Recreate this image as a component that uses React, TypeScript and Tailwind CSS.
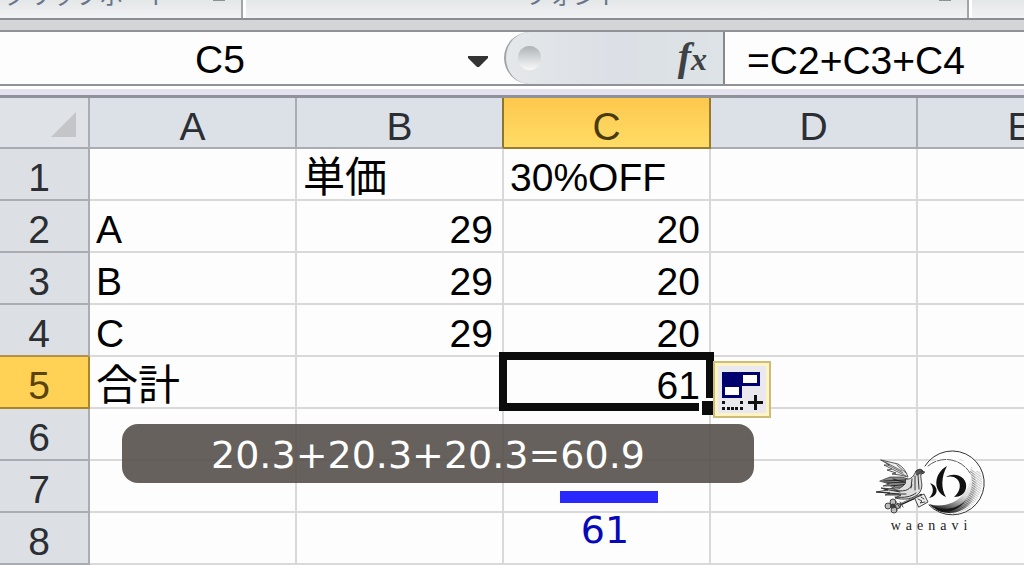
import type { ReactNode } from "react";

type RowData = { n: string; cells: string[] };

const columns = ["A", "B", "C", "D", "E"];

const rows: RowData[] = [
  { n: "1", cells: ["", "単価", "30%OFF", "", ""] },
  { n: "2", cells: ["A", "29", "20", "", ""] },
  { n: "3", cells: ["B", "29", "20", "", ""] },
  { n: "4", cells: ["C", "29", "20", "", ""] },
  { n: "5", cells: ["合計", "", "61", "", ""] },
  { n: "6", cells: ["", "", "", "", ""] },
  { n: "7", cells: ["", "", "", "", ""] },
  { n: "8", cells: ["", "", "", "", ""] },
  { n: "", cells: ["", "", "", "", ""] },
];

function RibbonGroup({ label, className }: { label: string; className: string }) {
  return (
    <div
      className={`relative flex h-full shrink-0 items-end justify-center border-r-2 border-[#a2a5a8] shadow-[3px_0_0_#fff] ${className}`}
    >
      <span className="mb-[10px] whitespace-nowrap text-[24px] leading-6 text-[#68748a]">{label}</span>
      <span className="absolute right-4 top-0 h-px w-3 bg-[#8d9194]" />
    </div>
  );
}

function Ribbon() {
  return (
    <header className="flex h-[18px] overflow-hidden bg-linear-to-b from-[#e4e7e8] to-[#f1f2f3]">
      <RibbonGroup label="クリップボード" className="w-[243px] pr-[66px]" />
      <RibbonGroup label="フォント" className="w-[726px] pr-[64px]" />
    </header>
  );
}

function FormulaBar() {
  return (
    <section className="flex h-[56px] border-y-2 border-[#8f9397] bg-[#fdfdfd]">
      <div className="flex w-[504px] shrink-0 items-center">
        <input
          aria-label="Name box"
          defaultValue="C5"
          className="h-full w-[440px] bg-transparent pt-[3px] text-center text-[39px] text-black outline-none"
        />
        <button aria-label="Show names" className="flex h-full flex-1 items-center justify-end pr-4">
          <svg width="20" height="12" viewBox="0 0 20 12" className="mt-2">
            <path d="M0 0H20V2L11 11H9L0 2Z" fill="#333" />
          </svg>
        </button>
      </div>
      <div className="flex w-[221px] shrink-0 items-center justify-between rounded-l-full border-l-2 border-r-2 border-l-[#a0a5aa] border-r-[#85898d] bg-linear-to-r from-[#e4e8ea] via-[#dce0e6] to-[#dde3e6] pl-3 pr-4">
        <span className="h-6 w-[23px] rounded-xl bg-linear-to-b from-[#aeb2b4] via-[#d5d8da] to-[#f8f9f9]" />
        <button
          aria-label="Insert function"
          className="font-['Liberation_Serif',serif] text-[40px] font-bold italic leading-10 text-[#3f4245]"
        >
          f<span className="text-[32px]">x</span>
        </button>
      </div>
      <input
        aria-label="Formula"
        defaultValue="=C2+C3+C4"
        className="min-w-0 flex-1 bg-transparent pl-[22px] pt-[7px] text-[39px] text-black outline-none"
      />
    </section>
  );
}

function Selection() {
  return (
    <>
      <div className="pointer-events-none absolute -bottom-1 -left-[5px] -right-[5px] -top-[5px] border-8 border-[#0c0c0c]" />
      <div className="absolute -bottom-2 -right-[5px] h-[17px] w-[15px] border-l-[3px] border-t-[3px] border-white bg-[#0c0c0c]" />
      <button
        aria-label="Auto fill options"
        className="absolute left-full top-1 ml-1 flex h-[57px] w-[58px] items-center justify-center border-2 border-[#cdbb78] bg-[#e9e8ef] shadow-[inset_0_0_0_3px_#fff3c4]"
      >
        <svg width="42" height="42" viewBox="0 0 42 42">
          <path d="M1 3H39V17H21V29H1Z" fill="#00006e" />
          <path d="M22 6H36V14H22ZM4 18H18V26H4Z" fill="#fff" />
          <path
            d="M1 32h3v3H1zM19 32h3v3h-3zM1 38h3v3H1zM6 38h3v3H6zM10 38h3v3h-3zM14 38h3v3h-3zM19 38h3v3h-3zM33 26h3v15h-3zM27 32h15v3H27z"
            fill="#111"
          />
        </svg>
      </button>
    </>
  );
}

function Cell({ text, selected }: { text: string; selected: boolean }) {
  const numeric = /^\d+$/.test(text);
  const japanese = /[^\x00-\x7f]/.test(text);
  let body: ReactNode = text;
  if (selected) {
    body = (
      <>
        {text}
        <Selection />
      </>
    );
  }
  return (
    <td
      className={`relative h-[52px] whitespace-nowrap border-b-2 border-r-2 border-[#d9d9d9] p-0 ${
        numeric ? "pr-[9px] text-right" : "pl-[6px] text-left"
      } ${japanese ? "pt-2 text-[42px] leading-[40px]" : "pt-2 text-[39px] leading-[42px]"} ${selected ? "z-10" : ""}`}
    >
      {body}
    </td>
  );
}

function columnStyle(c: string) {
  if (c === "C") return "border-[#9b7a2c] bg-linear-to-b from-[#fdc84c] to-[#ffdc66] text-[#4a3a12]";
  if (c === "B") return "border-b-[#a9adb3] border-r-[#8f742f] bg-[#dce0e7] text-[#2b2e33]";
  return "border-[#a9adb3] bg-[#dce0e7] text-[#2b2e33]";
}

function rowStyle(n: string) {
  if (n === "5") return "border-[#a8842f] bg-[#ffd155] text-[#5a430f]";
  if (n === "4") return "border-r-[#a9adb3] border-b-[#b0904a] bg-[#dce0e5] text-[#2b2e33]";
  return "border-[#a9adb3] bg-[#dce0e5] text-[#2b2e33]";
}

function Sheet() {
  return (
    <table className="w-[1125px] table-fixed border-separate border-spacing-0 text-black">
      <colgroup>
        <col className="w-[90px]" />
        {columns.map((c) => (
          <col key={c} className="w-[207px]" />
        ))}
      </colgroup>
      <thead>
        <tr>
          <th className="h-[51px] border-b-2 border-r-2 border-[#a9adb3] bg-[#dfe3e7] p-0 pt-1">
            <svg width="25" height="25" viewBox="0 0 26 26" className="ml-auto mr-3">
              <path d="M26 0V26H0Z" fill="#c3c5c8" />
            </svg>
          </th>
          {columns.map((c) => (
            <th
              key={c}
              className={`h-[51px] border-b-2 border-r-2 p-0 pt-2 text-[39px] font-normal leading-[41px] ${columnStyle(c)}`}
            >
              {c}
            </th>
          ))}
        </tr>
      </thead>
      <tbody>
        {rows.map((row, r) => (
          <tr key={r}>
            <th
              className={`h-[52px] border-b-2 border-r-2 p-0 pr-[10px] pt-2 text-[39px] font-normal leading-[42px] ${rowStyle(row.n)}`}
            >
              {row.n}
            </th>
            {row.cells.map((text, c) => (
              <Cell key={c} text={text} selected={row.n === "5" && c === 2} />
            ))}
          </tr>
        ))}
      </tbody>
    </table>
  );
}

function Logo() {
  return (
    <div className="absolute left-[872px] top-[446px] w-[116px]">
      <svg width="116" height="72" viewBox="0 0 116 72" fill="none" stroke="#333" strokeLinecap="round">
        <defs>
          <pattern id="hatch" width="2" height="2" patternUnits="userSpaceOnUse" patternTransform="rotate(35)">
            <path d="M0 0H2" stroke="#333" strokeWidth="1.1" />
          </pattern>
          <linearGradient id="shade" x1="0.75" y1="0" x2="0.35" y2="1">
            <stop offset="0" stopColor="#777" stopOpacity="0" />
            <stop offset="0.55" stopColor="#555" stopOpacity="0.2" />
            <stop offset="1" stopColor="#111" stopOpacity="0.95" />
          </linearGradient>
        </defs>

        <circle cx="76" cy="38" r="27" fill="#fdfdfd" stroke="none" />
        <path d="M54 18A32 32 0 1 1 58 60A27 27 0 1 0 96 18A31 31 0 0 0 54 18Z" fill="#fdfdfd" stroke="none" />
        <path d="M53 20A32 32 0 1 1 57 59" strokeWidth="1" />
        <path d="M56 20A28 28 0 0 1 98 27" strokeWidth="0.8" strokeDasharray="9 1.5" />
        <path d="M98 20A27 27 0 0 1 57 58A32 32 0 0 0 98 20Z" fill="url(#shade)" stroke="none" />
        <path d="M99 20C112 43 96 71 70 65C90 66 106 45 98 27Z" fill="url(#hatch)" stroke="none" opacity="0.7" />
        <path d="M98 25C104 43 93 60 76 63C65 64 60 61 57 58C62 65 72 68 82 68C103 66 115 43 108 25" fill="url(#hatch)" stroke="none" opacity="0.5" />
        <path d="M57 58C66 65 84 65 94 54C88 63 76 68 67 65Z" fill="#171717" stroke="none" />

        <path d="M58 37C62 42 62 47 57 52C67 50 67 40 58 37Z" fill="#111" stroke="none" />
        <path d="M75 20C62 27 60 45 74 51C69 43 69 31 75 20Z" fill="#111" stroke="none" />
        <path d="M74 31C84 25 96 32 94 42C93 48 88 51 82 51C88 46 90 38 85 33C82 30 78 30 74 31Z" fill="#111" stroke="none" />

        <path d="M9 14L26 18C31 21 34 25 36 31L28 29L20 28L24 27L15 24L20 23L12 19L17 19Z" fill="#eee" strokeWidth="0.8" />
        <path d="M13 16L30 25M16 19L31 27M20 23L34 30M25 19L34 27" strokeWidth="0.7" />
        <path d="M8 35L18 31L30 31L36 33L40 39L29 41L18 43L23 40L11 40L17 38Z" fill="#888" strokeWidth="0.7" />
        <path d="M12 35L34 34M15 37L34 36M19 40L37 38M21 33L35 37" stroke="#111" strokeWidth="0.8" />
        <path d="M34 33C39 34 42 30 44 25C47 23 51 24 52 27L49 28C48 34 52 39 48 46C42 54 31 54 23 52L29 49L13 49L18 47L4 46L16 44L9 42L21 43C27 44 30 41 33 38Z" fill="#dedede" strokeWidth="0.9" />
        <path d="M5 46L27 48M12 43L28 46M16 48L34 48M23 51C32 52 39 51 44 47M22 44C31 46 37 45 40 39M40 33L39 42M43 30L43 44M46 29L47 43" stroke="#222" strokeWidth="0.9" />
        <path d="M44 25C47 22 51 23 51 26L45 29Z" fill="#555" stroke="#222" strokeWidth="0.7" />
        <path d="M49 25L53 26L49 28" strokeWidth="0.7" />

        <path d="M25 60L49 49" stroke="#111" strokeWidth="2.2" />
        <path d="M26 59L48 49" stroke="#eee" strokeWidth="0.6" />
        <path d="M43 52L52 48L56 56L47 61Z" fill="#eee" strokeWidth="0.9" />
        <path d="M46 53L50 55L48 57L53 56M49 51L52 53" strokeWidth="0.9" />
        <g fill="#bbb" strokeWidth="0.9">
          <circle cx="16" cy="60" r="3" />
          <circle cx="21" cy="56" r="3" />
          <circle cx="26" cy="60" r="2.5" />
          <circle cx="22" cy="64" r="3" />
          <circle cx="21" cy="60" r="2" fill="#444" />
        </g>
        <path d="M28 56L31 61M25 57L28 62" strokeWidth="0.9" />
      </svg>
      <p className="pl-[3px] text-center font-['Liberation_Serif',serif] text-[14px] leading-4 tracking-[5px] text-[#222]">
        waenavi
      </p>
    </div>
  );
}

export default function App() {
  return (
    <main className="relative h-screen overflow-hidden bg-[#fdfdfd] font-['Liberation_Sans','Noto_Sans_CJK_JP',sans-serif]">
      <Ribbon />
      <div className="h-3 border-t-2 border-[#8b8e91] bg-[#d3d5d7]" />
      <FormulaBar />
      <div className="h-[12px] border-b-[3px] border-t-[3px] border-b-[#8f9298] border-t-white bg-[#e3e2ee]" />
      <Sheet />
      <div className="absolute left-[122px] top-[424px] z-10 flex h-[59px] w-[632px] items-center justify-center rounded-2xl bg-[#514b47]/88 pr-5 pt-1 font-['DejaVu_Sans',sans-serif] text-[38px] text-white">
        20.3+20.3+20.3=60.9
      </div>
      <div className="absolute left-[560px] top-[491px] flex w-[98px] flex-col items-center font-['DejaVu_Sans',sans-serif]">
        <span className="h-3 w-full bg-[#2929ff]" />
        <span className="pr-2 pt-1 text-[38px] leading-[46px] text-[#0808bb]">61</span>
      </div>
      <Logo />
    </main>
  );
}
